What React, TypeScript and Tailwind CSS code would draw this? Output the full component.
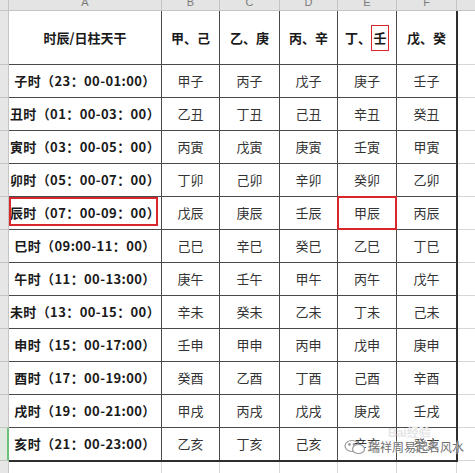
import React from "react";

const rows: string[][] = [
  ["子时（23：00-01:00）", "甲子", "丙子", "戊子", "庚子", "壬子"],
  ["丑时（01：00-03：00）", "乙丑", "丁丑", "己丑", "辛丑", "癸丑"],
  ["寅时（03：00-05：00）", "丙寅", "戊寅", "庚寅", "壬寅", "甲寅"],
  ["卯时（05：00-07：00）", "丁卯", "己卯", "辛卯", "癸卯", "乙卯"],
  ["辰时（07：00-09：00）", "戊辰", "庚辰", "壬辰", "甲辰", "丙辰"],
  ["巳时（09:00-11：00）", "己巳", "辛巳", "癸巳", "乙巳", "丁巳"],
  ["午时（11：00-13:00）", "庚午", "壬午", "甲午", "丙午", "戊午"],
  ["未时（13：00-15：00）", "辛未", "癸未", "乙未", "丁未", "己未"],
  ["申时（15：00-17:00）", "壬申", "甲申", "丙申", "戊申", "庚申"],
  ["酉时（17：00-19:00）", "癸酉", "乙酉", "丁酉", "己酉", "辛酉"],
  ["戌时（19：00-21:00）", "甲戌", "丙戌", "戊戌", "庚戌", "壬戌"],
  ["亥时（21：00-23:00）", "乙亥", "丁亥", "己亥", "辛亥", "癸亥"],
];

const headerCols = [
  { l: "A", w: "w-[153px]" },
  { l: "B", w: "w-[58px]" },
  { l: "C", w: "w-[60px]" },
  { l: "D", w: "w-[58px]" },
  { l: "E", w: "w-[59px]" },
  { l: "F", w: "w-[60px]" },
];

function WeChatIcon() {
  return (
    <svg width="22" height="16" viewBox="0 0 22 16" fill="none" stroke="#9a9a9a" strokeWidth="1.2">
      <ellipse cx="8" cy="7" rx="7" ry="5.5" />
      <ellipse cx="14.5" cy="10" rx="6" ry="4.5" fill="#fff" />
      <circle cx="5.5" cy="5.5" r="0.8" fill="#9a9a9a" />
      <circle cx="10" cy="5.5" r="0.8" fill="#9a9a9a" />
    </svg>
  );
}

export default function App() {
  return (
    <div className="relative w-[475px] h-[473px] overflow-hidden bg-white font-['Noto_Sans_CJK_SC','Liberation_Sans',sans-serif] text-[13px] text-[#222]">
      {/* column header bar */}
      <div className="flex h-[11px] bg-[#e4e4e4] border-b border-[#c4c4c4]">
        <div className="w-[9px] shrink-0 border-r border-[#c4c4c4]" />
        {headerCols.map((c) => (
          <div
            key={c.l}
            className={`${c.w} shrink-0 border-r border-[#c4c4c4] flex justify-center overflow-hidden`}
          >
            <span className="text-[11px] leading-none -mt-[3px] text-[#7a7a7a] font-['Liberation_Sans',sans-serif]">
              {c.l}
            </span>
          </div>
        ))}
        <div className="flex-1" />
      </div>

      <div className="flex">
        {/* row numbers */}
        <div className="w-[9px] shrink-0 flex flex-col bg-[#e6e6e6]">
          <div className="h-[54px] border-b border-r border-[#c4c4c4]" />
          {rows.map((r, i) => (
            <div
              key={i}
              className={`h-[33px] border-b border-[#c4c4c4] border-r ${
                i === 11 ? "border-r-[#6cc07a] border-r-2 bg-[#dfe9e0]" : "border-r-[#c4c4c4]"
              }`}
            />
          ))}
          <div className="h-[20px] border-r border-[#c4c4c4]" />
        </div>

        {/* table area */}
        <div className="flex flex-col">
          <div className="grid grid-cols-[152px_57px_59px_57px_58px_59px] grid-rows-[53px_repeat(12,32px)] gap-px bg-[#4a4a4a] border-r-2 border-b-2 border-[#2e2e2e]">
            <div className="bg-white flex items-center justify-center font-bold text-[#1a1a1a]">
              时辰/日柱天干
            </div>
            <div className="bg-white flex items-center justify-center font-bold text-[#1a1a1a]">甲、己</div>
            <div className="bg-white flex items-center justify-center font-bold text-[#1a1a1a]">乙、庚</div>
            <div className="bg-white flex items-center justify-center font-bold text-[#1a1a1a]">丙、辛</div>
            <div className="bg-white flex items-center justify-center font-bold text-[#1a1a1a]">
              <span>丁、</span>
              <span className="w-[18px] h-[26px] border-[1.5px] border-[#d9262c] flex items-center justify-center">
                壬
              </span>
            </div>
            <div className="bg-white flex items-center justify-center font-bold text-[#1a1a1a]">戊、癸</div>

            {rows.map((r, i) =>
              r.map((cell, j) => (
                <div
                  key={`${i}-${j}`}
                  className={`relative bg-white flex items-center justify-center ${
                    j === 0 ? "font-bold text-[#1a1a1a] whitespace-nowrap tracking-[0.4px]" : "text-[#333]"
                  }`}
                >
                  {cell}
                  {i === 4 && j === 0 && (
                    <div className="absolute left-0 top-0 right-[3px] bottom-[3px] border-2 border-[#d9262c]" />
                  )}
                  {i === 4 && j === 4 && (
                    <div className="absolute -left-px -top-px -right-px -bottom-px border-2 border-[#d9262c]" />
                  )}
                </div>
              ))
            )}
          </div>
          {/* row below table */}
          <div className="grid grid-cols-[153px_58px_60px_58px_59px_60px] h-[20px]">
            <div className="border-r border-[#d6d6d6]" />
            <div className="border-r border-[#d6d6d6]" />
            <div className="border-r border-[#d6d6d6]" />
            <div className="border-r border-[#d6d6d6]" />
            <div className="border-r border-[#d6d6d6]" />
            <div className="border-r border-[#d6d6d6]" />
          </div>
        </div>

        {/* column G */}
        <div className="flex-1 flex flex-col">
          <div className="h-[54px] border-b border-[#d6d6d6]" />
          {rows.map((r, i) => (
            <div key={i} className="h-[33px] border-b border-[#d6d6d6]" />
          ))}
        </div>
      </div>

      {/* watermark */}
      <div className="absolute left-[388px] top-[423px] text-[12px] text-[#e6e6e6] font-['Liberation_Sans',sans-serif] font-bold">
        Bai<span className="font-['Noto_Sans_CJK_SC',sans-serif]">经验</span>
      </div>
      <div className="absolute left-[344px] top-[439px] flex items-center gap-[2px]">
        <WeChatIcon />
        <span className="text-[12px] leading-none text-[#6f6f6f] [text-shadow:0_0_2px_#fff,0_0_2px_#fff]">
          瑞祥周易起名风水
        </span>
      </div>
    </div>
  );
}
